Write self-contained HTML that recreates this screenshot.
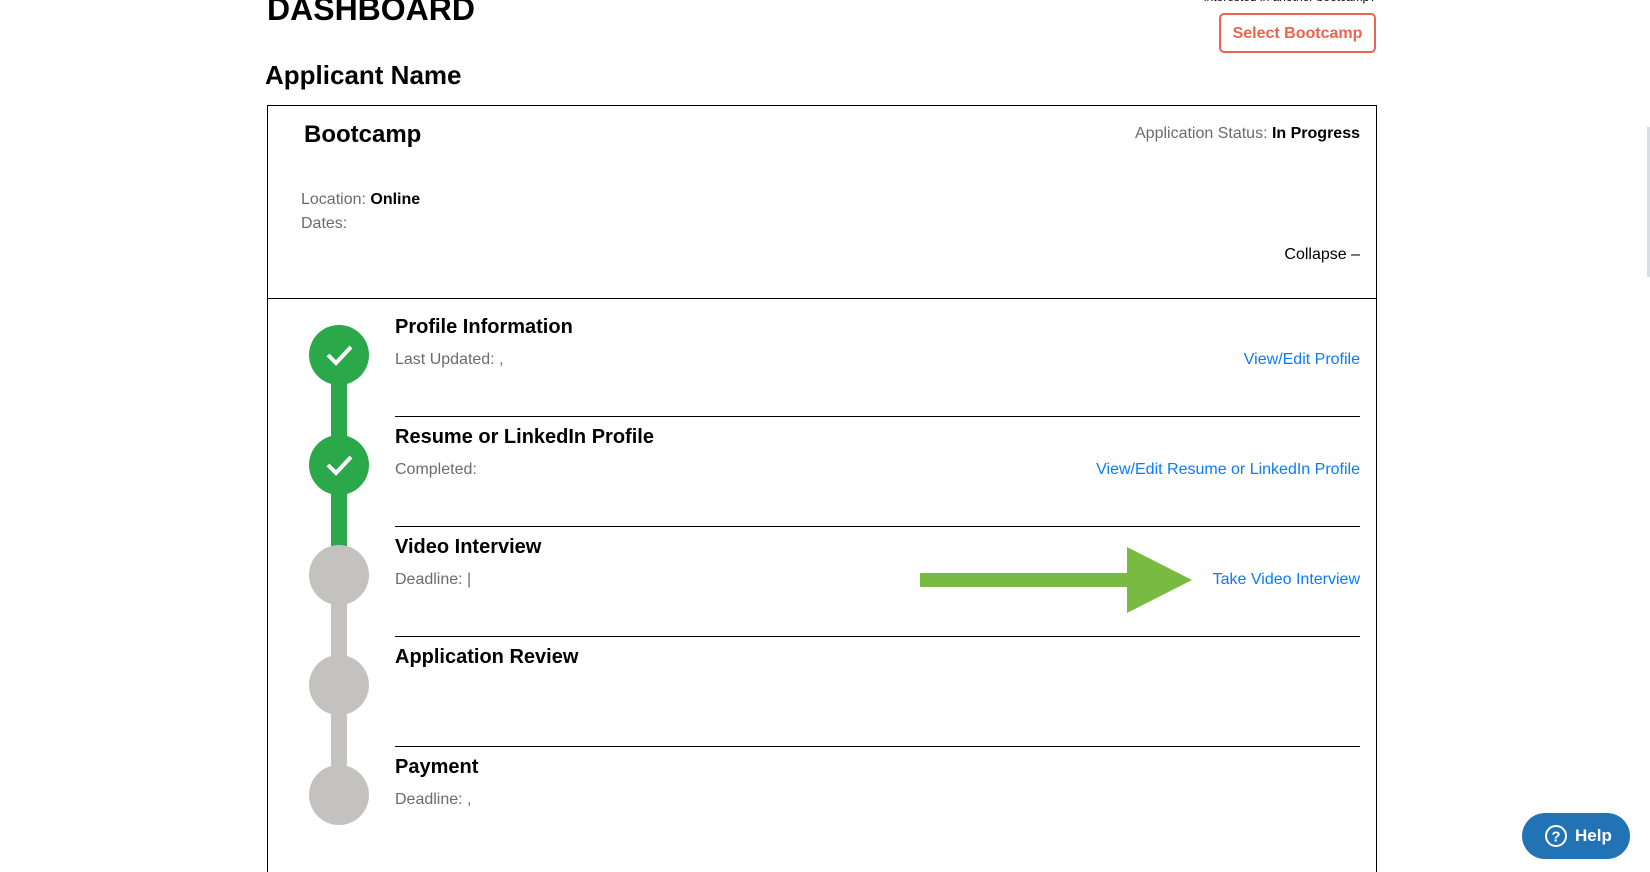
<!DOCTYPE html>
<html style="overflow:hidden;height:872px"><head><style>
body{margin:0;width:1650px;height:872px;overflow:hidden;background:#fff;font-family:"Liberation Sans",Arial,sans-serif;position:relative}
.a{position:absolute;white-space:nowrap}
.g{color:#6b6b6b;font-size:16px}
.t{font-size:20px;font-weight:bold;color:#000}
.l{color:#0a7bff;font-size:16px;right:290px}
.hr{position:absolute;left:395px;width:965px;height:1px;background:#000}
.c{position:absolute;left:309px;width:60px;height:60px;border-radius:50%}
</style></head><body>
<div class="a" style="left:267px;top:-9px;font-size:32px;font-weight:bold">DASHBOARD</div>
<div class="a" style="right:274px;top:-10px;font-size:12px">interested in another bootcamp?</div>
<div class="a" style="left:1219px;top:13px;width:153px;height:36px;border:2px solid #ea644f;border-radius:5px;color:#ea644f;font-weight:bold;font-size:16px;text-align:center;line-height:37px">Select Bootcamp</div>
<div class="a" style="left:265px;top:60px;font-size:26px;font-weight:bold">Applicant Name</div>
<div class="a" style="left:267px;top:105px;width:1108px;height:767px;border:1px solid #000;border-bottom:none"></div>
<div class="a" style="left:268px;top:298px;width:1108px;height:1px;background:#000"></div>
<div class="a" style="left:304px;top:121px;font-size:24px;font-weight:bold">Bootcamp</div>
<div class="a g" style="right:290px;top:125px">Application Status: <b style="color:#000">In Progress</b></div>
<div class="a g" style="left:301px;top:191px">Location: <b style="color:#000">Online</b></div>
<div class="a g" style="left:301px;top:215px">Dates: </div>
<div class="a" style="right:290px;top:246px;font-size:16px">Collapse –</div>

<div class="a" style="left:331px;top:360px;width:16px;height:215px;background:#2ba84a"></div>
<div class="a" style="left:331px;top:575px;width:16px;height:220px;background:#c3c2c1"></div>
<div class="c" style="top:325px;background:#2ba84a"></div>
<div class="c" style="top:435px;background:#2ba84a"></div>
<div class="c" style="top:545px;background:#c3c2c1"></div>
<div class="c" style="top:655px;background:#c3c2c1"></div>
<div class="c" style="top:765px;background:#c3c2c1"></div>
<svg class="a" style="left:309px;top:325px" width="60" height="60"><path d="M19 30 L27 38 L42 22" fill="none" stroke="#fff" stroke-width="4"/></svg>
<svg class="a" style="left:309px;top:435px" width="60" height="60"><path d="M19 30 L27 38 L42 22" fill="none" stroke="#fff" stroke-width="4"/></svg>

<div class="a t" style="left:395px;top:316px">Profile Information</div>
<div class="a g" style="left:395px;top:351px">Last Updated: ,</div>
<div class="a l" style="top:351px">View/Edit Profile</div>
<div class="hr" style="top:416px"></div>
<div class="a t" style="left:395px;top:426px">Resume or LinkedIn Profile</div>
<div class="a g" style="left:395px;top:461px">Completed:</div>
<div class="a l" style="top:461px">View/Edit Resume or LinkedIn Profile</div>
<div class="hr" style="top:526px"></div>
<div class="a t" style="left:395px;top:536px">Video Interview</div>
<div class="a g" style="left:395px;top:571px">Deadline: |</div>
<div class="a l" style="top:571px">Take Video Interview</div>
<div class="hr" style="top:636px"></div>
<div class="a t" style="left:395px;top:646px">Application Review</div>
<div class="hr" style="top:746px"></div>
<div class="a t" style="left:395px;top:756px">Payment</div>
<div class="a g" style="left:395px;top:791px">Deadline: ,</div>

<svg class="a" style="left:0;top:0" width="1650" height="872"><polygon points="920,573 1127,573 1127,547 1192,580 1127,613 1127,587 920,587" fill="#79ba42"/></svg>

<div class="a" style="left:1522px;top:813px;width:108px;height:46px;border-radius:23px;background:#2273b5;color:#fff;font-weight:bold;font-size:17px;line-height:46px">
<svg style="position:absolute;left:22px;top:11px" width="24" height="24"><circle cx="12" cy="12" r="10" fill="none" stroke="#fff" stroke-width="2"/><text x="12" y="17.5" font-size="15" font-weight="bold" fill="#fff" text-anchor="middle" font-family="Liberation Sans">?</text></svg>
<span style="position:absolute;left:53px">Help</span></div>
<div class="a" style="left:1647px;top:127px;width:3px;height:150px;background:#d8dde4"></div>
</body></html>
